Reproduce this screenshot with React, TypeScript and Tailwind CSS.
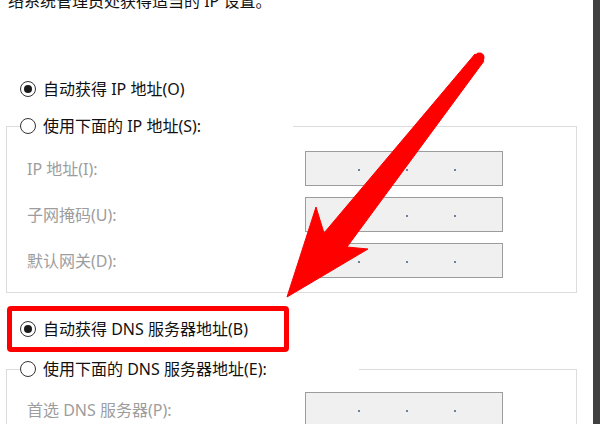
function Radio({ checked }: { checked?: boolean }) {
  return (
    <span className="w-[16px] h-[16px] shrink-0 rounded-full border border-[#333333] bg-white flex items-center justify-center">
      {checked && <span className="w-[8px] h-[8px] rounded-full bg-[#1a1a1a]" />}
    </span>
  );
}

function IpBox({ dots = 3 }: { dots?: number }) {
  return (
    <div className="w-[198px] h-[35px] border border-[#9c9c9c] bg-[#f0f0f0] flex items-center pl-[52px] pt-[3px] gap-[46px]">
      {Array.from({ length: dots }).map((_, i) => (
        <span key={i} className="w-[2px] h-[2px] bg-[#6f7f9e]" />
      ))}
    </div>
  );
}

function Field({ label }: { label: string }) {
  return (
    <div className="flex items-center h-[35px]">
      <span className="w-[298px] pl-[20px] text-[#9d9d9d]">{label}</span>
      <IpBox />
    </div>
  );
}

function Arrow() {
  return (
    <svg
      className="absolute left-0 top-0 pointer-events-none"
      width="593"
      height="424"
      viewBox="0 0 593 424"
    >
      <polygon
        points="287,297 316,207 324,233 475,54 484,61 347,247 368,249"
        fill="#ff0000"
        stroke="#ff0000"
        strokeWidth="1"
        strokeLinejoin="round"
      />
      <circle cx="479.5" cy="57.5" r="5" fill="#ff0000" />
    </svg>
  );
}

export default function App() {
  return (
    <div className="w-[600px] h-[424px] overflow-hidden flex bg-white text-[16px] leading-[20px] text-[#111111] font-['Noto_Sans','Noto_Sans_CJK_SC',sans-serif]">
      <div className="relative w-[593px] h-full">
        <p className="-mt-[9px] pl-[8px] whitespace-nowrap">络系统管理员处获得适当的 IP 设置。</p>

        <div className="mt-[68px] h-[20px] flex items-center pl-[20px] gap-[7px]">
          <Radio checked />
          <span>自动获得 IP 地址(O)</span>
        </div>

        <fieldset className="mt-[17px] ml-[6px] w-[571px] border border-[#dcdcdc]">
          <legend className="ml-[13px] w-[273px] h-[20px] flex items-center gap-[7px]">
            <Radio />
            <span>使用下面的 IP 地址(S):</span>
          </legend>
          <div className="pt-[15px] pb-[14px] flex flex-col gap-[11px]">
            <Field label="IP 地址(I):" />
            <Field label="子网掩码(U):" />
            <Field label="默认网关(D):" />
          </div>
        </fieldset>

        <div className="mt-[13px] ml-[7px] w-[282px] h-[46px] border-[5px] border-[#ff0000] rounded-[4px] flex items-center pl-[8px] gap-[7px]">
          <Radio checked />
          <span>自动获得 DNS 服务器地址(B)</span>
        </div>

        <fieldset className="mt-[7px] ml-[6px] w-[571px] border border-[#dcdcdc]">
          <legend className="ml-[13px] w-[339px] h-[20px] flex items-center gap-[7px]">
            <Radio />
            <span>使用下面的 DNS 服务器地址(E):</span>
          </legend>
          <div className="pt-[13px] pb-[14px] flex flex-col gap-[11px]">
            <Field label="首选 DNS 服务器(P):" />
          </div>
        </fieldset>

        <Arrow />
      </div>
      <div className="w-[7px] h-full bg-[#404040]" />
    </div>
  );
}
